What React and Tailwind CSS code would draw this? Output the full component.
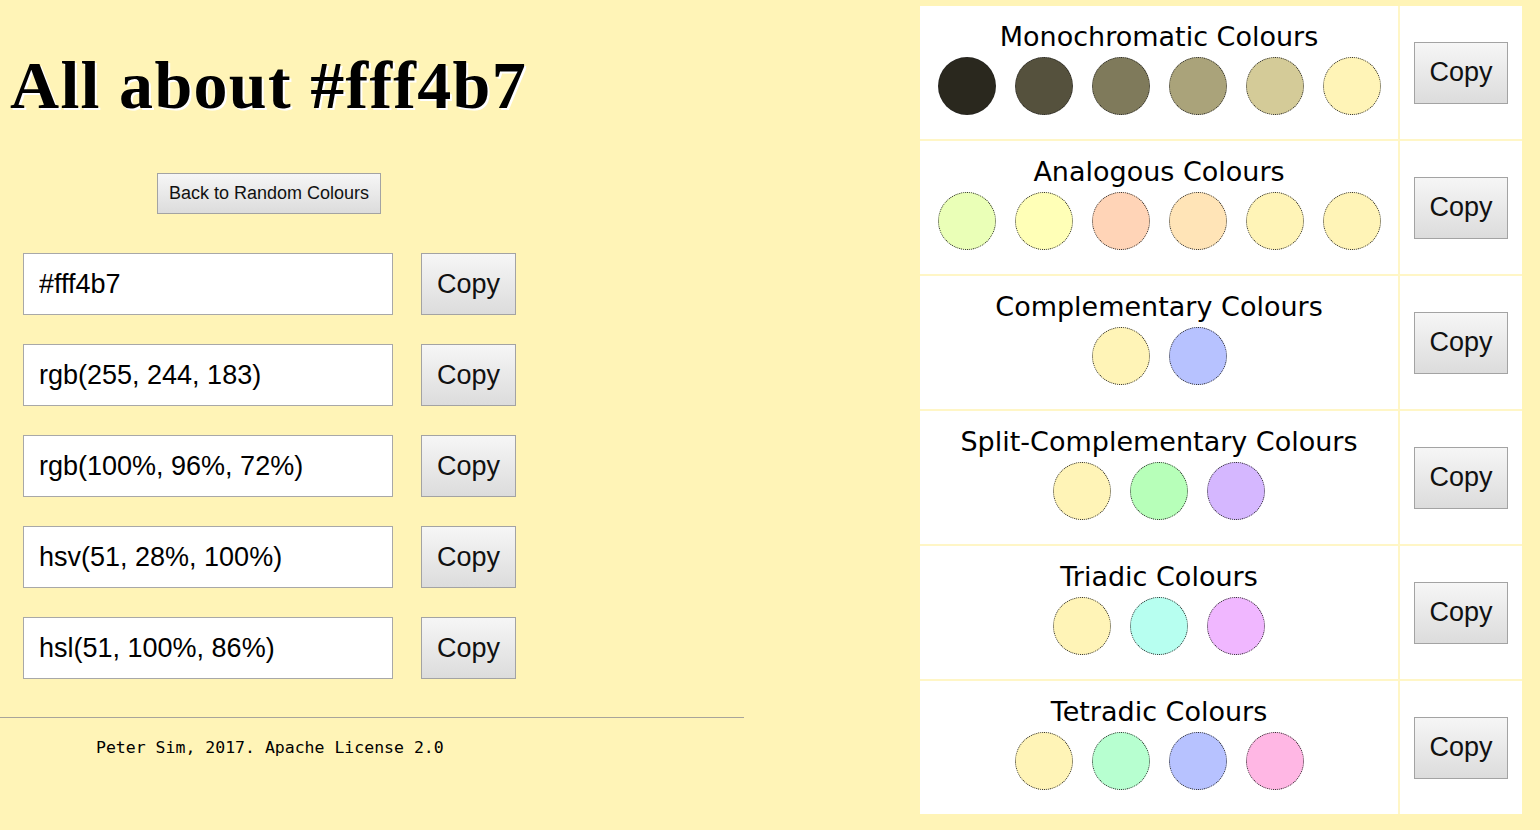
import React from "react";

const formats = [
  "#fff4b7",
  "rgb(255, 244, 183)",
  "rgb(100%, 96%, 72%)",
  "hsv(51, 28%, 100%)",
  "hsl(51, 100%, 86%)",
];

const schemes = [
  {
    title: "Monochromatic Colours",
    colors: ["bg-[#2a281e]", "bg-[#55513d]", "bg-[#7f7a5b]", "bg-[#aaa37a]", "bg-[#d4cb98]", "bg-[#fff4b7]"],
  },
  {
    title: "Analogous Colours",
    colors: ["bg-[#eaffb7]", "bg-[#ffffb7]", "bg-[#ffd4b7]", "bg-[#ffe4b7]", "bg-[#fff4b7]", "bg-[#fff4b7]"],
  },
  { title: "Complementary Colours", colors: ["bg-[#fff4b7]", "bg-[#b7c2ff]"] },
  { title: "Split-Complementary Colours", colors: ["bg-[#fff4b7]", "bg-[#b7ffb9]", "bg-[#d5b7ff]"] },
  { title: "Triadic Colours", colors: ["bg-[#fff4b7]", "bg-[#b7fff0]", "bg-[#f0b7ff]"] },
  { title: "Tetradic Colours", colors: ["bg-[#fff4b7]", "bg-[#b7ffd0]", "bg-[#b7c2ff]", "bg-[#ffb7e4]"] },
];

const btn =
  "border border-[#a3a3a3] bg-gradient-to-b from-[#f6f6f6] to-[#dcdcdc] text-[#111] [font-family:'Liberation_Sans',Arial,sans-serif]";

export default function App() {
  return (
    <div className="flex min-h-screen bg-[#fff4b7] text-black">
      <div className="w-[744px] shrink-0 flex flex-col">
        <h1 className="pt-[51px] pl-[10px] text-[68px] leading-none font-bold tracking-[1.3px] [font-family:'Liberation_Serif','Times_New_Roman',serif] [text-shadow:2px_2px_0_#ffffff]">
          All about #fff4b7
        </h1>
        <div className="w-[538px] flex justify-center mt-[54px]">
          <button className={`${btn} h-[41px] px-[11px] text-[18px]`}>Back to Random Colours</button>
        </div>
        <div className="flex flex-col gap-[29px] pl-[23px] mt-[39px]">
          {formats.map((f) => (
            <div key={f} className="flex items-center gap-[28px]">
              <input
                readOnly
                value={f}
                className="w-[370px] h-[62px] border border-[#a8a8a8] bg-white pl-[15px] text-[27px] text-black outline-none [font-family:'Liberation_Sans',Arial,sans-serif]"
              />
              <button className={`${btn} w-[95px] h-[62px] text-[27px]`}>Copy</button>
            </div>
          ))}
        </div>
        <div className="mt-[38px] h-px w-[744px] bg-[#a8a49a]" />
        <p className="mt-[20px] pl-[96px] text-[16.5px] leading-[20px] [font-family:'DejaVu_Sans_Mono',monospace]">
          Peter Sim, 2017. Apache License 2.0
        </p>
      </div>

      <div className="ml-auto mr-[18px] mt-[6px] self-start w-[602px] flex flex-col gap-[2px] bg-[#fff6c6]">
        {schemes.map((s) => (
          <div key={s.title} className="flex gap-[2px] h-[133px]">
            <div className="w-[478px] bg-white flex flex-col items-center pt-[15px]">
              <div className="text-[27px] leading-[31px] [font-family:'DejaVu_Sans',Verdana,sans-serif]">{s.title}</div>
              <div className="mt-[5px] flex gap-[19px]">
                {s.colors.map((c, i) => (
                  <span key={i} className={`block w-[58px] h-[58px] rounded-full border border-dotted border-[#222] ${c}`} />
                ))}
              </div>
            </div>
            <div className="flex-1 bg-white flex items-center justify-center">
              <button className={`${btn} w-[94px] h-[62px] text-[27px]`}>Copy</button>
            </div>
          </div>
        ))}
      </div>
    </div>
  );
}
